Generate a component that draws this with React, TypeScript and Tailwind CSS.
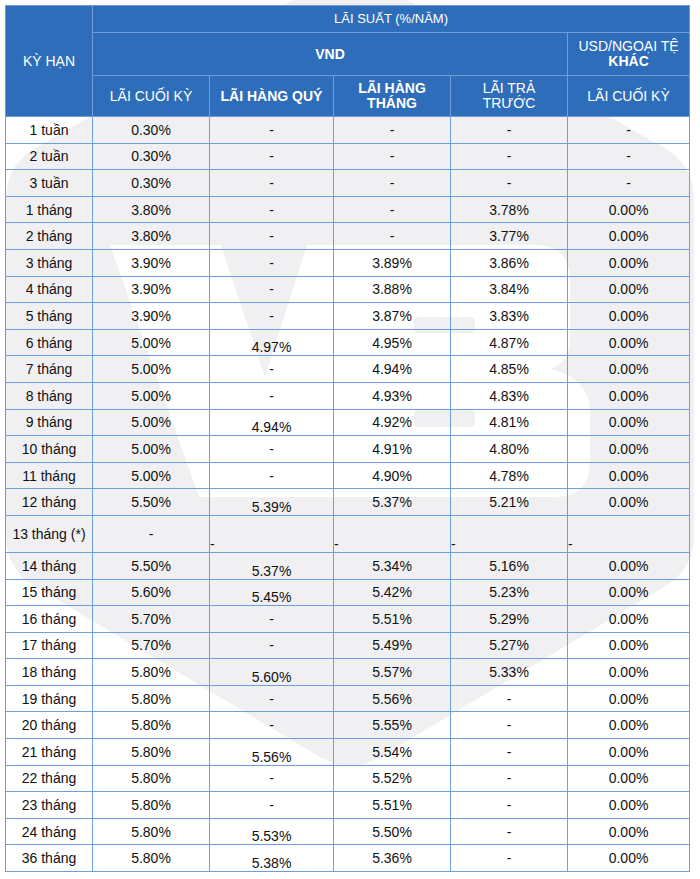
import React from "react";

type Pt = [number, number];

function roundedPoly(pts: Pt[], r: number): string {
  const n = pts.length;
  let d = "";
  for (let i = 0; i < n; i++) {
    const p0 = pts[(i - 1 + n) % n];
    const p1 = pts[i];
    const p2 = pts[(i + 1) % n];
    const l1 = Math.hypot(p0[0] - p1[0], p0[1] - p1[1]);
    const l2 = Math.hypot(p2[0] - p1[0], p2[1] - p1[1]);
    const a: Pt = [p1[0] + ((p0[0] - p1[0]) / l1) * r, p1[1] + ((p0[1] - p1[1]) / l1) * r];
    const b: Pt = [p1[0] + ((p2[0] - p1[0]) / l2) * r, p1[1] + ((p2[1] - p1[1]) / l2) * r];
    d += `${i === 0 ? "M" : "L"}${a[0].toFixed(1)},${a[1].toFixed(1)} Q${p1[0]},${p1[1]} ${b[0].toFixed(1)},${b[1].toFixed(1)} `;
  }
  return d + "Z";
}

const hex: Pt[] = [
  [350, -33],
  [694, 165],
  [694, 569],
  [350, 775],
  [6, 569],
  [6, 165],
];

function Watermark() {
  return (
    <svg
      className="absolute left-0 top-0 z-0"
      width={700}
      height={879}
      viewBox="0 0 700 879"
      aria-hidden="true"
    >
      <path d={roundedPoly(hex, 34)} fill="#f0f0f2" />
      {/* V */}
      <path d="M110,245 L221,245 L265,377 L307,245 L345,245 L345,497 L199,497 Z" fill="#ffffff" />
      {/* B */}
      <path
        d="M334,245 L535,245 Q570,245 570,280 L570,342 Q570,362 550,369 Q590,378 590,412 L590,462 Q590,497 555,497 L334,497 Z"
        fill="#ffffff"
      />
      <rect x={414} y={317} width={61} height={16} rx={4} fill="#f0f0f2" />
      <rect x={414} y={410} width={61} height={17} rx={4} fill="#f0f0f2" />
    </svg>
  );
}

type R = [string, string, string, string, string, string];

const before: R[] = [
  ["1 tuần", "0.30%", "-", "-", "-", "-"],
  ["2 tuần", "0.30%", "-", "-", "-", "-"],
  ["3 tuần", "0.30%", "-", "-", "-", "-"],
  ["1 tháng", "3.80%", "-", "-", "3.78%", "0.00%"],
  ["2 tháng", "3.80%", "-", "-", "3.77%", "0.00%"],
  ["3 tháng", "3.90%", "-", "3.89%", "3.86%", "0.00%"],
  ["4 tháng", "3.90%", "-", "3.88%", "3.84%", "0.00%"],
  ["5 tháng", "3.90%", "-", "3.87%", "3.83%", "0.00%"],
  ["6 tháng", "5.00%", "4.97%", "4.95%", "4.87%", "0.00%"],
  ["7 tháng", "5.00%", "-", "4.94%", "4.85%", "0.00%"],
  ["8 tháng", "5.00%", "-", "4.93%", "4.83%", "0.00%"],
  ["9 tháng", "5.00%", "4.94%", "4.92%", "4.81%", "0.00%"],
  ["10 tháng", "5.00%", "-", "4.91%", "4.80%", "0.00%"],
  ["11 tháng", "5.00%", "-", "4.90%", "4.78%", "0.00%"],
  ["12 tháng", "5.50%", "5.39%", "5.37%", "5.21%", "0.00%"],
];

const after: R[] = [
  ["14 tháng", "5.50%", "5.37%", "5.34%", "5.16%", "0.00%"],
  ["15 tháng", "5.60%", "5.45%", "5.42%", "5.23%", "0.00%"],
  ["16 tháng", "5.70%", "-", "5.51%", "5.29%", "0.00%"],
  ["17 tháng", "5.70%", "-", "5.49%", "5.27%", "0.00%"],
  ["18 tháng", "5.80%", "5.60%", "5.57%", "5.33%", "0.00%"],
  ["19 tháng", "5.80%", "-", "5.56%", "-", "0.00%"],
  ["20 tháng", "5.80%", "-", "5.55%", "-", "0.00%"],
  ["21 tháng", "5.80%", "5.56%", "5.54%", "-", "0.00%"],
  ["22 tháng", "5.80%", "-", "5.52%", "-", "0.00%"],
  ["23 tháng", "5.80%", "-", "5.51%", "-", "0.00%"],
  ["24 tháng", "5.80%", "5.53%", "5.50%", "-", "0.00%"],
  ["36 tháng", "5.80%", "5.38%", "5.36%", "-", "0.00%"],
];

const td = "border border-[#6d9fe0] p-0 text-center align-middle leading-4";
const th = "border border-[#6f9cd8] bg-[#2e6db9] p-0 text-center align-middle font-normal text-white";

function DataRow({ r }: { r: R }) {
  const quyIsNum = r[2] !== "-";
  return (
    <tr className="h-[26.6px]">
      <td className={td}>{r[0]}</td>
      <td className={td}>{r[1]}</td>
      <td className={`${td} ${quyIsNum ? "!align-bottom" : ""}`}>{r[2]}</td>
      <td className={td}>{r[3]}</td>
      <td className={td}>{r[4]}</td>
      <td className={td}>{r[5]}</td>
    </tr>
  );
}

export default function App() {
  return (
    <div className="relative h-[879px] w-[700px] overflow-hidden bg-white font-['Liberation_Sans',Arial,sans-serif] text-[14px] text-[#111]">
      <Watermark />
      <div className="relative z-10 pl-[5px] pt-[5px]">
        <table className="w-[684px] table-fixed border-collapse">
          <colgroup>
            <col className="w-[87px]" />
            <col className="w-[117px]" />
            <col className="w-[124px]" />
            <col className="w-[117px]" />
            <col className="w-[117px]" />
            <col className="w-[122px]" />
          </colgroup>
          <thead>
            <tr className="h-[27px]">
              <th rowSpan={3} className={th}>
                KỲ HẠN
              </th>
              <th colSpan={5} className={`${th} text-[13px]`}>
                LÃI SUẤT (%/NĂM)
              </th>
            </tr>
            <tr className="h-[43px]">
              <th colSpan={4} className={`${th} !font-bold`}>
                VND
              </th>
              <th className={`${th} leading-[15px]`}>
                USD/NGOẠI TỆ
                <br />
                <span className="font-bold">KHÁC</span>
              </th>
            </tr>
            <tr className="h-[41px]">
              <th className={th}>LÃI CUỐI KỲ</th>
              <th className={`${th} !font-bold`}>LÃI HÀNG QUÝ</th>
              <th className={`${th} !font-bold leading-[15px]`}>
                LÃI HÀNG
                <br />
                THÁNG
              </th>
              <th className={`${th} leading-[15px]`}>
                LÃI TRẢ
                <br />
                TRƯỚC
              </th>
              <th className={th}>LÃI CUỐI KỲ</th>
            </tr>
          </thead>
          <tbody>
            {before.map((r) => (
              <DataRow key={r[0]} r={r} />
            ))}
            <tr className="h-[37px]">
              <td className={td}>13 tháng (*)</td>
              <td className={td}>-</td>
              <td className={`${td} !text-left !align-bottom`}>-</td>
              <td className={`${td} !text-left !align-bottom`}>-</td>
              <td className={`${td} !text-left !align-bottom`}>-</td>
              <td className={`${td} !text-left !align-bottom`}>-</td>
            </tr>
            {after.map((r) => (
              <DataRow key={r[0]} r={r} />
            ))}
          </tbody>
        </table>
      </div>
    </div>
  );
}
